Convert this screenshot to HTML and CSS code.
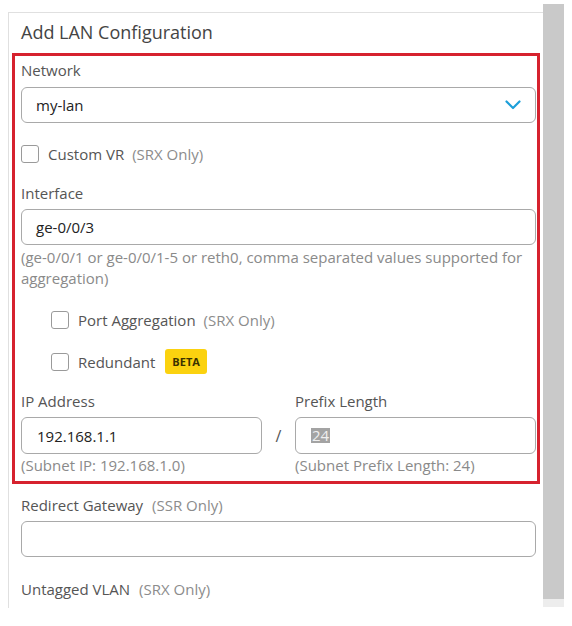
FILE: index.html
```html
<!DOCTYPE html>
<html>
<head>
<meta charset="utf-8">
<link rel="stylesheet" href="styles.css">
</head>
<body>
<div class="stage">
  <div class="panel">
    <div class="header">Add LAN Configuration</div>
    <div class="highlight">
      <div class="label first">Network</div>
      <div class="select">
        <span class="value">my-lan</span>
        <svg class="chev" width="16" height="10" viewBox="0 0 16 10"><path d="M1.5 1.5 L8 8 L14.5 1.5" fill="none" stroke="#1c9fd9" stroke-width="2.2" stroke-linecap="round" stroke-linejoin="round"/></svg>
      </div>
      <div class="check-row custom">
        <span class="box"></span><span class="ctext">Custom VR</span><span class="note">(SRX Only)</span>
      </div>
      <div class="label iface">Interface</div>
      <div class="input"><span class="value">ge-0/0/3</span></div>
      <div class="help">(ge-0/0/1 or ge-0/0/1-5 or reth0, comma separated values supported for aggregation)</div>
      <div class="check-row sub port">
        <span class="box"></span><span class="ctext">Port Aggregation</span><span class="note">(SRX Only)</span>
      </div>
      <div class="check-row sub redundant">
        <span class="box"></span><span class="ctext">Redundant</span><span class="badge">BETA</span>
      </div>
      <div class="ipgrid">
        <div class="label">IP Address</div>
        <div></div>
        <div class="label">Prefix Length</div>
        <div class="input tall"><span class="value">192.168.1.1</span></div>
        <div class="slash">/</div>
        <div class="input tall"><span class="sel">24</span></div>
        <div class="help small">(Subnet IP: 192.168.1.0)</div>
        <div></div>
        <div class="help small">(Subnet Prefix Length: 24)</div>
      </div>
    </div>
    <div class="rest">
      <div class="label redirect">Redirect Gateway <span class="note">(SSR Only)</span></div>
      <div class="input"></div>
      <div class="label untagged">Untagged VLAN <span class="note">(SRX Only)</span></div>
    </div>
  </div>
  <div class="scroll">
    <div class="thumb"></div>
    <div class="track-end"></div>
  </div>
</div>
</body>
</html>
```

FILE: styles.css
```css
* { box-sizing: border-box; }
html, body { margin: 0; padding: 0; background: #ffffff; }
body {
  font-family: "Open Sans", "Liberation Sans", sans-serif;
  font-size: 15px;
  color: #555555;
  width: 572px;
  height: 626px;
  overflow: hidden;
}
.stage {
  display: flex;
  align-items: flex-start;
  padding: 4px 0 0 8px;
}
.panel {
  width: 535px;
  height: 596px;
  margin-top: 8px;
  border-top: 1px solid #e0e0e0;
  border-left: 1px solid #e0e0e0;
  overflow: hidden;
}
.header {
  height: 40px;
  padding-left: 12px;
  font-size: 18px;
  line-height: 38px;
  color: #444444;
}
.highlight {
  margin: 0 3px;
  border: 3px solid #d6222e;
  padding: 4px 1px 6px 6px;
}
.label {
  line-height: 20px;
  margin-bottom: 6px;
  color: #555555;
}
.label.first { margin-bottom: 7px; }
.select, .input {
  height: 36px;
  border: 1px solid #a9a9a9;
  border-radius: 6px;
  display: flex;
  align-items: center;
  padding: 0 14px;
  color: #222222;
  background: #fff;
}
.select { justify-content: space-between; padding-right: 14px; }
.chev { display: block; }
.input.tall { height: 37px; }
.check-row {
  display: flex;
  align-items: center;
  height: 20px;
}
.check-row.custom { margin-top: 21px; }
.box {
  width: 18px;
  height: 18px;
  border: 1px solid #9a9a9a;
  border-radius: 3px;
  background: #fff;
  margin-right: 9px;
  flex: none;
}
.ctext { color: #555555; }
.note { color: #8c8c8c; margin-left: 8px; }
.label .note { margin-left: 5px; }
.iface { margin-top: 19px; }
.help {
  color: #8a8a8a;
  line-height: 21px;
  margin-top: 2px;
}
.check-row.sub { padding-left: 30px; }
.check-row.port { margin-top: 21px; }
.check-row.redundant { margin-top: 19px; height: 25px; }
.badge {
  background: #fbd20f;
  color: #3a3200;
  font-size: 11px;
  font-weight: 700;
  border-radius: 3px;
  height: 25px;
  line-height: 25px;
  padding: 0 7px;
  margin-left: 10px;
}
.ipgrid {
  display: grid;
  grid-template-columns: 1fr 33px 1fr;
  margin-top: 17px;
}
.ipgrid .input { padding-left: 15px; }
.slash {
  display: flex;
  align-items: center;
  justify-content: center;
  font-size: 16px;
  color: #555;
}
.sel {
  background: #a3a3a3;
  color: #efefef;
  line-height: 15px;
  padding: 0 1px;
}
.help.small { line-height: 20px; margin-top: 1px; }
.rest {
  padding: 0 7px 0 12px;
}
.redirect { margin-top: 11px; }
.untagged { margin-top: 22px; }
.scroll {
  width: 21px;
  flex: none;
}
.thumb { height: 595px; background: #c9c9c9; }
.track-end { height: 8px; background: #ededed; }
```
